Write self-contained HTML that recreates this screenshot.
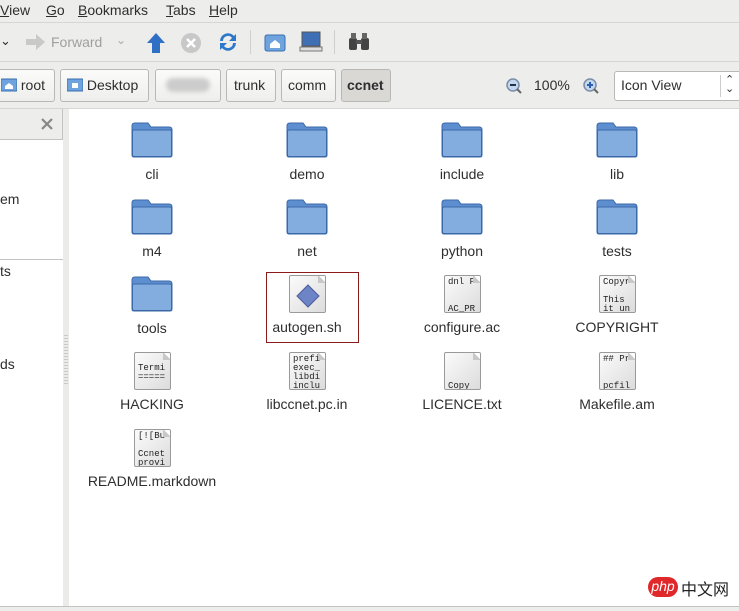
<!DOCTYPE html>
<html><head><meta charset="utf-8"><style>
*{margin:0;padding:0;box-sizing:border-box}
body{width:739px;height:611px;overflow:hidden;background:#ededec;font-family:"Liberation Sans","DejaVu Sans",sans-serif;font-size:14px;color:#2e2e2e;position:relative}
.a{position:absolute}
.menu span{position:absolute;top:2px;font-size:14px}
.btn{position:absolute;top:69px;height:33px;border:1px solid #b8b8b4;border-radius:3px;background:linear-gradient(#fbfbfa,#eeeeec);font-size:14px;line-height:31px;padding:0 6px}
.sep{position:absolute;width:1px;background:#cfcfcd}
.item{position:absolute;width:130px;text-align:center;font-size:14px;color:#2e2e2e}
.fold{position:absolute;left:44px;top:0;width:42px;height:36px}
.doc{position:absolute;left:47px;top:0;width:37px;height:38px;background:linear-gradient(135deg,#fbfbfb,#dcdcdc);border:1px solid #9a9a9a;border-radius:2px;font-family:"Liberation Mono",monospace;font-size:9px;line-height:9px;text-align:left;padding:2px 3px;color:#222;white-space:pre;overflow:hidden}
.doc:after{content:"";position:absolute;right:-1px;top:-1px;border-style:solid;border-width:0 8px 8px 0;border-color:#fff #fff #c8c8c8 #c8c8c8}
.lbl{position:absolute;left:0;width:130px;top:44px}
</style></head><body>
<div class="menu">
<span style="left:0"><u>V</u>iew</span>
<span style="left:46px"><u>G</u>o</span>
<span style="left:78px"><u>B</u>ookmarks</span>
<span style="left:166px"><u>T</u>abs</span>
<span style="left:209px"><u>H</u>elp</span>
</div>
<div class="a" style="left:0;top:22px;width:739px;height:1px;background:#d6d6d4"></div>
<div class="a" style="left:0;top:33px;font-size:13px">&#x2304;</div>
<svg class="a" style="left:25px;top:33px" width="22" height="18"><path d="M1 6h10V1l9 8-9 8v-5H1z" fill="#c9c9c9"/></svg>
<div class="a" style="left:51px;top:34px;color:#9f9f9f;font-size:14px">Forward</div>
<div class="a" style="left:116px;top:33px;color:#aaa;font-size:12px">&#x2304;</div>
<svg class="a" style="left:146px;top:32px" width="20" height="22"><path d="M10 1l9 10h-5v10H6V11H1z" fill="#2f6fc4"/></svg>
<svg class="a" style="left:180px;top:32px" width="22" height="22"><circle cx="11" cy="11" r="10" fill="#c8c8c8"/><path d="M7 7l8 8M15 7l-8 8" stroke="#fff" stroke-width="2.5"/></svg>
<svg class="a" style="left:217px;top:31px" width="22" height="22"><path d="M3 10a8 8 0 0 1 14-5l2-2v7h-7l3-3a5 5 0 0 0-9 3z M19 12a8 8 0 0 1-14 5l-2 2v-7h7l-3 3a5 5 0 0 0 9-3z" fill="#2d78c8"/></svg>
<div class="sep" style="left:250px;top:30px;height:24px"></div>
<svg class="a" style="left:264px;top:32px" width="22" height="20"><rect x="1" y="3" width="20" height="16" rx="2" fill="#6ea3de" stroke="#3a6fb0"/><path d="M6 12l5-4 5 4v4H6z" fill="#fff"/></svg>
<svg class="a" style="left:299px;top:31px" width="24" height="22"><rect x="3" y="1" width="18" height="14" fill="#3f6fb5" stroke="#555"/><rect x="1" y="16" width="22" height="4" fill="#ddd" stroke="#777"/></svg>
<div class="sep" style="left:334px;top:30px;height:24px"></div>
<svg class="a" style="left:347px;top:32px" width="24" height="20"><rect x="2" y="6" width="8" height="12" rx="2" fill="#444"/><rect x="14" y="6" width="8" height="12" rx="2" fill="#444"/><rect x="4" y="1" width="5" height="6" fill="#666"/><rect x="15" y="1" width="5" height="6" fill="#666"/><rect x="9" y="8" width="6" height="4" fill="#555"/></svg>
<div class="a" style="left:0;top:61px;width:739px;height:1px;background:#d6d6d4"></div>
<div class="btn" style="left:-6px;width:61px;padding-left:6px"><svg width="16" height="14" style="vertical-align:-2px"><rect x="0" y="1" width="16" height="12" rx="1" fill="#6ea3de" stroke="#3a6fb0"/><path d="M4 8l4-3 4 3v3H4z" fill="#fff"/></svg> root</div>
<div class="btn" style="left:60px;width:89px"><svg width="16" height="14" style="vertical-align:-2px"><rect x="0" y="1" width="16" height="12" rx="1" fill="#6ea3de" stroke="#3a6fb0"/><rect x="5" y="5" width="6" height="5" fill="#fff"/></svg> Desktop</div>
<div class="btn" style="left:155px;width:66px"><div style="margin:8px 4px;height:14px;background:#ccc;border-radius:7px;filter:blur(2px)"></div></div>
<div class="btn" style="left:226px;width:50px;padding-left:7px">trunk</div>
<div class="btn" style="left:281px;width:55px;padding-left:6px">comm</div>
<div class="btn" style="left:341px;width:50px;background:#d9d8d5;font-weight:bold;padding-left:5px">ccnet</div>
<svg class="a" style="left:505px;top:77px" width="18" height="18"><circle cx="8" cy="8" r="6" fill="#c4d7ee" stroke="#7a8da8" stroke-width="1.5"/><path d="M5 8h6" stroke="#234" stroke-width="2"/><path d="M12 12l4 4" stroke="#666" stroke-width="2"/></svg>
<div class="a" style="left:534px;top:77px">100%</div>
<svg class="a" style="left:582px;top:77px" width="18" height="18"><circle cx="8" cy="8" r="6" fill="#c4d7ee" stroke="#7a8da8" stroke-width="1.5"/><path d="M5 8h6M8 5v6" stroke="#2a5fb0" stroke-width="2"/><path d="M12 12l4 4" stroke="#666" stroke-width="2"/></svg>
<div class="a" style="left:614px;top:71px;width:130px;height:30px;border:1px solid #b8b8b4;border-radius:3px;background:#fff;padding:5px 6px">Icon View<span style="position:absolute;left:105px;top:3px;width:1px;height:22px;background:#ccc"></span><span style="position:absolute;left:110px;top:4px;font-size:11px;line-height:9px">&#x2303;<br>&#x2304;</span></div>
<div class="a" style="left:0;top:108px;width:739px;height:1px;background:#d6d6d4"></div>
<div class="a" style="left:0;top:109px;width:63px;height:497px;background:#fff"></div>
<div class="a" style="left:0;top:109px;width:63px;height:31px;background:#ededec;border-bottom:1px solid #c3c3c1;border-right:1px solid #c3c3c1"></div>
<svg class="a" style="left:40px;top:117px" width="14" height="14"><path d="M2 2l10 10M12 2L2 12" stroke="#888" stroke-width="2.2"/></svg>
<div class="a" style="left:0;top:191px">em</div>
<div class="a" style="left:0;top:259px;width:63px;height:1px;background:#c3c3c1"></div>
<div class="a" style="left:0;top:263px">ts</div>
<div class="a" style="left:0;top:356px">ds</div>
<div class="a" style="left:63px;top:109px;width:6px;height:497px;background:#ebebea"></div>
<div class="a" style="left:64px;top:334px;width:4px;height:50px;background:radial-gradient(circle,#aaa 0.6px,transparent 0.8px) 0 0/2px 3px"></div>
<div class="a" style="left:69px;top:109px;width:670px;height:497px;background:#fff"></div>
<div class="a" style="left:0;top:606px;width:739px;height:5px;background:#ededec;border-top:1px solid #c3c3c1"></div>

<div class="a" style="left:266px;top:272px;width:93px;height:71px;border:1px solid #8b1a1a"></div>

<div class="item" style="left:87px;top:122px"><svg class="fold" viewBox="0 0 42 36"><path d="M1 4q0-3 3-3h13l3 4h18q3 0 3 3v25q0 2-2 2H3q-2 0-2-2z" fill="#5d8fd0" stroke="#3b69a8"/><rect x="1.5" y="8" width="39" height="26.5" rx="1.5" fill="#84addf" stroke="#3b69a8"/></svg><div class="lbl">cli</div></div>
<div class="item" style="left:242px;top:122px"><svg class="fold" viewBox="0 0 42 36"><path d="M1 4q0-3 3-3h13l3 4h18q3 0 3 3v25q0 2-2 2H3q-2 0-2-2z" fill="#5d8fd0" stroke="#3b69a8"/><rect x="1.5" y="8" width="39" height="26.5" rx="1.5" fill="#84addf" stroke="#3b69a8"/></svg><div class="lbl">demo</div></div>
<div class="item" style="left:397px;top:122px"><svg class="fold" viewBox="0 0 42 36"><path d="M1 4q0-3 3-3h13l3 4h18q3 0 3 3v25q0 2-2 2H3q-2 0-2-2z" fill="#5d8fd0" stroke="#3b69a8"/><rect x="1.5" y="8" width="39" height="26.5" rx="1.5" fill="#84addf" stroke="#3b69a8"/></svg><div class="lbl">include</div></div>
<div class="item" style="left:552px;top:122px"><svg class="fold" viewBox="0 0 42 36"><path d="M1 4q0-3 3-3h13l3 4h18q3 0 3 3v25q0 2-2 2H3q-2 0-2-2z" fill="#5d8fd0" stroke="#3b69a8"/><rect x="1.5" y="8" width="39" height="26.5" rx="1.5" fill="#84addf" stroke="#3b69a8"/></svg><div class="lbl">lib</div></div>

<div class="item" style="left:87px;top:199px"><svg class="fold" viewBox="0 0 42 36"><path d="M1 4q0-3 3-3h13l3 4h18q3 0 3 3v25q0 2-2 2H3q-2 0-2-2z" fill="#5d8fd0" stroke="#3b69a8"/><rect x="1.5" y="8" width="39" height="26.5" rx="1.5" fill="#84addf" stroke="#3b69a8"/></svg><div class="lbl">m4</div></div>
<div class="item" style="left:242px;top:199px"><svg class="fold" viewBox="0 0 42 36"><path d="M1 4q0-3 3-3h13l3 4h18q3 0 3 3v25q0 2-2 2H3q-2 0-2-2z" fill="#5d8fd0" stroke="#3b69a8"/><rect x="1.5" y="8" width="39" height="26.5" rx="1.5" fill="#84addf" stroke="#3b69a8"/></svg><div class="lbl">net</div></div>
<div class="item" style="left:397px;top:199px"><svg class="fold" viewBox="0 0 42 36"><path d="M1 4q0-3 3-3h13l3 4h18q3 0 3 3v25q0 2-2 2H3q-2 0-2-2z" fill="#5d8fd0" stroke="#3b69a8"/><rect x="1.5" y="8" width="39" height="26.5" rx="1.5" fill="#84addf" stroke="#3b69a8"/></svg><div class="lbl">python</div></div>
<div class="item" style="left:552px;top:199px"><svg class="fold" viewBox="0 0 42 36"><path d="M1 4q0-3 3-3h13l3 4h18q3 0 3 3v25q0 2-2 2H3q-2 0-2-2z" fill="#5d8fd0" stroke="#3b69a8"/><rect x="1.5" y="8" width="39" height="26.5" rx="1.5" fill="#84addf" stroke="#3b69a8"/></svg><div class="lbl">tests</div></div>

<div class="item" style="left:87px;top:276px"><svg class="fold" viewBox="0 0 42 36"><path d="M1 4q0-3 3-3h13l3 4h18q3 0 3 3v25q0 2-2 2H3q-2 0-2-2z" fill="#5d8fd0" stroke="#3b69a8"/><rect x="1.5" y="8" width="39" height="26.5" rx="1.5" fill="#84addf" stroke="#3b69a8"/></svg><div class="lbl">tools</div></div>
<div class="item" style="left:242px;top:275px"><div class="doc" style="top:0"><svg style="position:absolute;left:6px;top:8px" width="24" height="24"><path d="M12 1l11 11-11 11L1 12z" fill="#6d84c6" stroke="#4a5d9a"/></svg></div><div class="lbl">autogen.sh</div></div>
<div class="item" style="left:397px;top:275px"><div class="doc">dnl P


AC_PR</div><div class="lbl">configure.ac</div></div>
<div class="item" style="left:552px;top:275px"><div class="doc">Copyr

This
it un</div><div class="lbl">COPYRIGHT</div></div>

<div class="item" style="left:87px;top:352px"><div class="doc">
Termi
=====</div><div class="lbl">HACKING</div></div>
<div class="item" style="left:242px;top:352px"><div class="doc">prefi
exec_
libdi
inclu</div><div class="lbl">libccnet.pc.in</div></div>
<div class="item" style="left:397px;top:352px"><div class="doc">


Copy</div><div class="lbl">LICENCE.txt</div></div>
<div class="item" style="left:552px;top:352px"><div class="doc">## Pr


pcfil</div><div class="lbl">Makefile.am</div></div>

<div class="item" style="left:87px;top:429px"><div class="doc">[![Bu

Ccnet
provi</div><div class="lbl">README.markdown</div></div>

<div class="a" style="left:648px;top:577px;width:30px;height:20px;border-radius:10px;background:#e0282a;color:#fff;font-size:14px;font-style:italic;line-height:19px;text-align:center">php</div>
<div class="a" style="left:681px;top:576px;font-family:'Noto Sans CJK SC',sans-serif;font-size:16px;color:#222">中文网</div>
</body></html>
